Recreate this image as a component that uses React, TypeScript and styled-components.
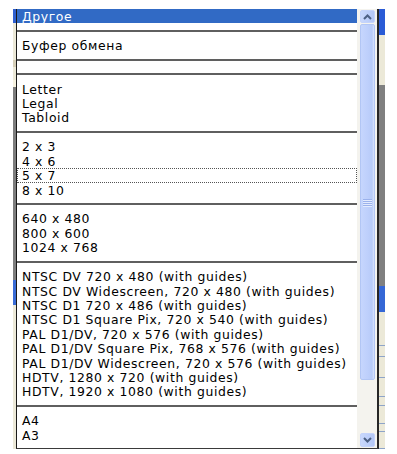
import React from "react";
import styled, { createGlobalStyle, css } from "styled-components";

const Global = createGlobalStyle`
  html, body { margin: 0; padding: 0; background: #ffffff; }
  body { font-family: "DejaVu Sans", Verdana, sans-serif; }
`;

const Page = styled.div`
  width: 397px;
  height: 454px;
  padding-top: 9px;
  box-sizing: border-box;
  background: #ffffff;
  display: flex;
  flex-direction: column;
`;

const Row = styled.div`
  display: flex;
  align-items: stretch;
`;

const Spacer = styled.div<{ $w: number }>`
  width: ${(p) => p.$w}px;
  flex: none;
`;

const Strip = styled.div<{ $w: number }>`
  width: ${(p) => p.$w}px;
  flex: none;
  display: flex;
  flex-direction: column;
`;

const Seg = styled.div<{ $h: number; $c: string; $line?: string }>`
  flex: none;
  height: ${(p) => p.$h}px;
  background: ${(p) => p.$c};
  ${(p) =>
    p.$line &&
    css`
      border-bottom: 1px solid ${p.$line};
      box-sizing: border-box;
    `}
`;

const SegFill = styled.div<{ $c: string }>`
  flex: 1;
  background: ${(p) => p.$c};
`;

const ListBox = styled.div`
  display: flex;
  border-left: 1px solid #1a1a1a;
  border-right: 2px solid #262626;
  border-bottom: 1px solid #3a3a3a;
  background: #ffffff;
`;

const Items = styled.div`
  width: 340px;
  display: flex;
  flex-direction: column;
`;

const Item = styled.div<{ $selected?: boolean; $focused?: boolean }>`
  height: 14.4px;
  line-height: 15px;
  padding-left: 5px;
  font-family: "DejaVu Sans", Verdana, sans-serif;
  font-size: 12.4px;
  letter-spacing: 0.62px;
  color: #000000;
  white-space: nowrap;
  box-sizing: border-box;
  ${(p) =>
    p.$selected &&
    css`
      background: #316ac5;
      color: #ffffff;
    `}
  ${(p) =>
    p.$focused &&
    css`
      outline: 1px dotted #555555;
      outline-offset: -1px;
    `}
`;

const Separator = styled.div`
  height: 14.6px;
  display: flex;
  align-items: center;
  &::after {
    content: "";
    display: block;
    width: 100%;
    height: 2px;
    background: #5f5f5f;
  }
`;

const ScrollBar = styled.div`
  width: 20px;
  flex: none;
  background: #f4f3ee;
  display: flex;
  flex-direction: column;
  padding: 1px 2px 1px 3px;
  box-sizing: border-box;
`;

const ScrollButton = styled.div<{ $h: number }>`
  height: ${(p) => p.$h}px;
  flex: none;
  border-radius: 2px;
  background: linear-gradient(90deg, #c9d8fc 0%, #bccefa 60%, #b3c7f5 100%);
  border: 1px solid #c4d3fb;
  box-sizing: border-box;
  display: flex;
  align-items: center;
  justify-content: center;
`;

const Thumb = styled.div`
  height: 356px;
  flex: none;
  margin-top: 1px;
  border-radius: 2px;
  background: linear-gradient(90deg, #c6d6fd 0%, #bdcffb 55%, #b7cbf8 85%, #d9e4fd 100%);
  border: 1px solid #b2c6f4;
  box-sizing: border-box;
  display: flex;
  align-items: center;
  justify-content: center;
`;

const Grip = styled.div`
  width: 9px;
  display: flex;
  flex-direction: column;
  gap: 1px;
`;

const GripLine = styled.div`
  height: 1px;
  background: #9bb2ec;
  box-shadow: 0 1px 0 #e3ebfe;
`;

const TrackRest = styled.div`
  flex: 1;
`;

const Chevron = ({ up }: { up?: boolean }) => (
  <svg width="9" height="6" viewBox="0 0 9 6">
    <path
      d={up ? "M1 5 L4.5 1.5 L8 5" : "M1 1 L4.5 4.5 L8 1"}
      fill="none"
      stroke="#4d6185"
      strokeWidth="2"
    />
  </svg>
);

const groups: string[][] = [
  ["Другое"],
  ["Буфер обмена"],
  [],
  ["Letter", "Legal", "Tabloid"],
  ["2 x 3", "4 x 6", "5 x 7", "8 x 10"],
  ["640 x 480", "800 x 600", "1024 x 768"],
  [
    "NTSC DV 720 x 480 (with guides)",
    "NTSC DV Widescreen, 720 x 480 (with guides)",
    "NTSC D1 720 x 486 (with guides)",
    "NTSC D1 Square Pix, 720 x 540 (with guides)",
    "PAL D1/DV, 720 x 576 (with guides)",
    "PAL D1/DV Square Pix, 768 x 576 (with guides)",
    "PAL D1/DV Widescreen, 720 x 576 (with guides)",
    "HDTV, 1280 x 720 (with guides)",
    "HDTV, 1920 x 1080 (with guides)",
  ],
  ["A4", "A3"],
];

const leftSegs: [number, string][] = [
  [14, "#2f5fcf"],
  [37, "#ece9d8"],
  [7, "#d6cfb8"],
  [13, "#ece9d8"],
  [7, "#f7f3e1"],
  [193, "#7d7d7d"],
  [25, "#3a6cd6"],
];

const rightSegs: [number, string, string?][] = [
  [26, "#2a5bd6"],
  [50, "#ece9d8"],
  [201, "#808080"],
  [26, "#3567d6"],
  [34, "#ece9d8", "#8ea4c8"],
  [11, "#ece9d8", "#8ea4c8"],
  [21, "#ece9d8", "#8ea4c8"],
  [19, "#ece9d8", "#8ea4c8"],
  [9, "#ece9d8", "#8ea4c8"],
  [18, "#ece9d8", "#8ea4c8"],
  [8, "#ece9d8", "#8ea4c8"],
  [17, "#ece9d8", "#8ea4c8"],
];

export default function App() {
  return (
    <>
      <Global />
      <Page>
        <Row>
          <Spacer $w={13} />
          <Strip $w={3}>
            {leftSegs.map(([h, c], i) => (
              <Seg key={i} $h={h} $c={c} />
            ))}
            <SegFill $c="#ece9d8" />
          </Strip>
          <ListBox>
            <Items>
              {groups.map((g, gi) => (
                <React.Fragment key={gi}>
                  {gi > 0 && <Separator />}
                  {g.map((t) => (
                    <Item key={t} $selected={t === "Другое"} $focused={t === "5 x 7"}>
                      {t}
                    </Item>
                  ))}
                </React.Fragment>
              ))}
            </Items>
            <ScrollBar>
              <ScrollButton $h={13}>
                <Chevron up />
              </ScrollButton>
              <Thumb>
                <Grip>
                  <GripLine />
                  <GripLine />
                  <GripLine />
                  <GripLine />
                </Grip>
              </Thumb>
              <TrackRest />
              <ScrollButton $h={14}>
                <Chevron />
              </ScrollButton>
            </ScrollBar>
          </ListBox>
          <Strip $w={6}>
            {rightSegs.map(([h, c, l], i) => (
              <Seg key={i} $h={h} $c={c} $line={l} />
            ))}
            <SegFill $c="#ece9d8" />
          </Strip>
        </Row>
      </Page>
    </>
  );
}
